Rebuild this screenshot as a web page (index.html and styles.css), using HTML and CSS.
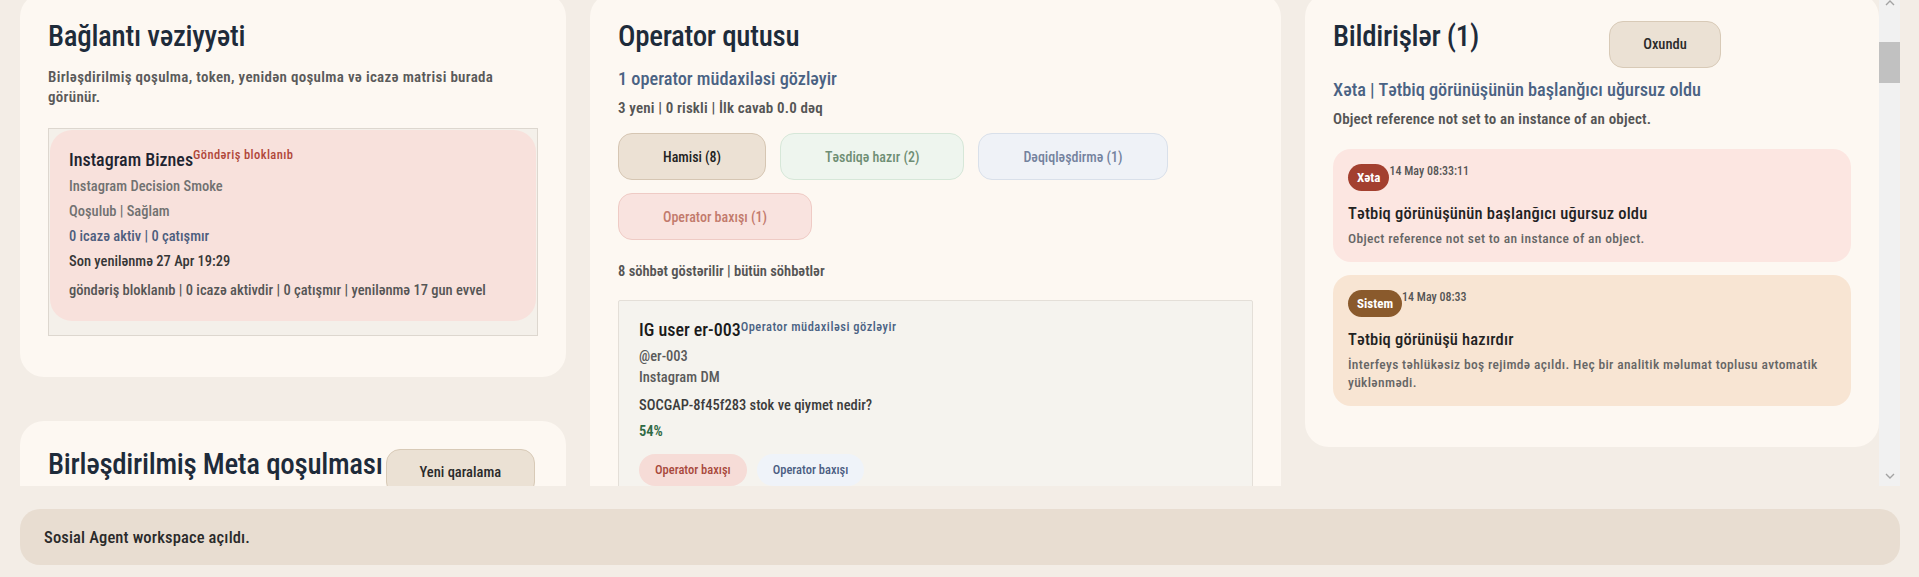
FILE: index.html
```html
<!DOCTYPE html>
<html lang="az">
<head>
  <meta charset="UTF-8" />
  <meta name="viewport" content="width=device-width, initial-scale=1.0"/>
  <title>Sosial Agent</title>
  <link rel="stylesheet" href="styles.css">
</head>
<body>

<div class="app">
  <div class="viewport-row">
    <main class="workspace" id="workspace">

      <!-- HEADER (scrolled out of view) -->
      <header class="hero">
        <h1>Sosial Agent</h1>
        <p>Instagram və Facebook söhbətləri, operator növbəsi və bildirişlər bir yerdə.</p>
      </header>

      <div class="board" id="board">

        <!-- LEFT COLUMN -->
        <div class="column">
          <section class="card">
            <h2 class="card-title">Bağlantı vəziyyəti</h2>
            <p class="card-desc">Birləşdirilmiş qoşulma, token, yenidən qoşulma və icazə matrisi burada görünür.</p>
            <div class="account-list">
              <div class="account">
                <h3 class="item-title">Instagram Biznes<span class="flag">Göndəriş bloklanıb</span></h3>
                <p class="row muted">Instagram Decision Smoke</p>
                <p class="row muted">Qoşulub | Sağlam</p>
                <p class="row info">0 icazə aktiv | 0 çatışmır</p>
                <p class="row strong">Son yenilənmə 27 Apr 19:29</p>
                <p class="row summary">göndəriş bloklanıb | 0 icazə aktivdir | 0 çatışmır | yenilənmə 17 gun evvel</p>
              </div>
            </div>
          </section>

          <section class="card card-tall">
            <div class="card-head">
              <h2 class="card-title">Birləşdirilmiş Meta qoşulması</h2>
              <button class="btn">Yeni qaralama</button>
              <span></span>
            </div>
          </section>
        </div>

        <!-- MIDDLE COLUMN -->
        <section class="card">
          <h2 class="card-title">Operator qutusu</h2>
          <p class="lead">1 operator müdaxiləsi gözləyir</p>
          <p class="meta-line">3 yeni | 0 riskli | İlk cavab 0.0 dəq</p>
          <div class="filters">
            <button class="filter filter-all">Hamisi (8)</button>
            <button class="filter filter-ready">Təsdiqə hazır (2)</button>
            <button class="filter filter-clarify">Dəqiqləşdirmə (1)</button>
            <button class="filter filter-review">Operator baxışı (1)</button>
          </div>
          <p class="list-meta">8 söhbət göstərilir | bütün söhbətlər</p>
          <div class="conversations" id="conversations"></div>
        </section>

        <!-- RIGHT COLUMN -->
        <div class="column">
          <section class="card">
            <div class="card-head">
              <h2 class="card-title">Bildirişlər (1)</h2>
              <button class="btn">Oxundu</button>
              <span></span>
            </div>
            <p class="lead lead-tight">Xəta | Tətbiq görünüşünün başlanğıcı uğursuz oldu</p>
            <p class="meta-line">Object reference not set to an instance of an object.</p>
            <div class="notes">
              <div class="note note-error">
                <div class="note-head">
                  <span class="pill pill-error">Xəta</span>
                  <span class="note-time">14 May 08:33:11</span>
                </div>
                <h4 class="note-title">Tətbiq görünüşünün başlanğıcı uğursuz oldu</h4>
                <p class="note-text">Object reference not set to an instance of an object.</p>
              </div>
              <div class="note note-system">
                <div class="note-head">
                  <span class="pill pill-system">Sistem</span>
                  <span class="note-time">14 May 08:33</span>
                </div>
                <h4 class="note-title">Tətbiq görünüşü hazırdır</h4>
                <p class="note-text">İnterfeys təhlükəsiz boş rejimdə açıldı. Heç bir analitik məlumat toplusu avtomatik yüklənmədi.</p>
              </div>
            </div>
          </section>
        </div>

      </div>
    </main>

    <!-- scrollbar of the workspace -->
    <div class="scrollbar">
      <span class="scroll-btn scroll-up"><svg width="10" height="6" viewBox="0 0 10 6"><polyline points="1,5 5,1 9,5" fill="none" stroke="#a3a3a3" stroke-width="1.4"/></svg></span>
      <span class="scroll-track"><span class="scroll-thumb"></span></span>
      <span class="scroll-btn scroll-down"><svg width="10" height="6" viewBox="0 0 10 6"><polyline points="1,1 5,5 9,1" fill="none" stroke="#a3a3a3" stroke-width="1.4"/></svg></span>
    </div>
  </div>

  <footer class="status">Sosial Agent workspace açıldı.</footer>
</div>

<script>
  const conversations = [
    { name: 'IG user er-003', state: 'Operator müdaxiləsi gözləyir', handle: '@er-003', channel: 'Instagram DM', text: 'SOCGAP-8f45f283 stok ve qiymet nedir?', score: 54, tags: [['review', 'Operator baxışı'], ['info', 'Operator baxışı']] },
    { name: 'IG user er-002', state: 'Təsdiqə hazır', handle: '@er-002', channel: 'Instagram DM', text: 'Çatdırılma neçə günə olur?', score: 81, tags: [['ready', 'Təsdiqə hazır']] },
    { name: 'IG user er-001', state: 'Təsdiqə hazır', handle: '@er-001', channel: 'Instagram DM', text: 'Bu məhsul hələ satışdadır?', score: 77, tags: [['ready', 'Təsdiqə hazır']] },
    { name: 'FB user fb-014', state: 'Dəqiqləşdirmə', handle: '@fb-014', channel: 'Facebook Messenger', text: 'Ölçü cədvəlini göndərə bilərsiniz?', score: 62, tags: [['info', 'Dəqiqləşdirmə']] },
    { name: 'FB user fb-011', state: 'Yeni', handle: '@fb-011', channel: 'Facebook Messenger', text: 'Salam, endirim var?', score: 70, tags: [['info', 'Yeni']] },
    { name: 'IG user er-009', state: 'Yeni', handle: '@er-009', channel: 'Instagram şərh', text: 'Qiymət?', score: 68, tags: [['info', 'Yeni']] },
    { name: 'IG user er-007', state: 'Yeni', handle: '@er-007', channel: 'Instagram DM', text: 'Mağazanın ünvanı haradır?', score: 73, tags: [['info', 'Yeni']] },
    { name: 'IG user er-005', state: 'Cavablandı', handle: '@er-005', channel: 'Instagram DM', text: 'Təşəkkürlər!', score: 90, tags: [['ready', 'Cavablandı']] }
  ];

  function renderConversations() {
    const list = document.getElementById('conversations');
    list.innerHTML = '';
    conversations.forEach(c => {
      const item = document.createElement('article');
      item.className = 'conv';
      item.innerHTML = `
        <h3 class="conv-title">${c.name}<span class="conv-state">${c.state}</span></h3>
        <p class="conv-handle">${c.handle}</p>
        <p class="conv-channel">${c.channel}</p>
        <p class="conv-text">${c.text}</p>
        <p class="conv-score">${c.score}%</p>
        <div class="tags">${c.tags.map(t => `<span class="tag tag-${t[0]}">${t[1]}</span>`).join('')}</div>
      `;
      list.appendChild(item);
    });
  }

  renderConversations();

  const ws = document.getElementById('workspace');
  const board = document.getElementById('board');
  ws.scrollTop = board.offsetTop + 7;
</script>

</body>
</html>
```
FILE: styles.css
```css
body {
  margin: 0;
  background: #f3ede6;
  font-family: Roboto, "Noto Sans", sans-serif;
  font-stretch: condensed;
  color: #1e2b3a;
}

p, h1, h2, h3, h4 {
  margin: 0;
}

button {
  font-family: inherit;
  font-stretch: inherit;
  cursor: pointer;
}

.app {
  padding: 0 19px 0 20px;
}

.viewport-row {
  display: flex;
  height: 486px;
}

/* scrolling area */
.workspace {
  position: relative;
  flex: 1;
  overflow: hidden;
}

.scrollbar {
  display: flex;
  flex-direction: column;
  width: 21px;
  background: #f1f1f1;
}

.scroll-btn {
  display: flex;
  justify-content: center;
}

.scroll-up {
  height: 13px;
  align-items: flex-start;
}

.scroll-down {
  height: 21px;
  align-items: center;
}

.scroll-track {
  flex: 1;
}

.scroll-thumb {
  display: block;
  height: 41px;
  margin-top: 29px;
  background: #c1c1c1;
}

.hero {
  height: 265px;
  margin-bottom: 24px;
  box-sizing: border-box;
  padding: 40px 28px;
  background: #fdf8f2;
  border-radius: 24px;
}

.hero h1 {
  font-size: 36px;
  font-weight: 500;
}

.hero p {
  margin-top: 10px;
  font-size: 16px;
  color: #595959;
}

.board {
  display: grid;
  grid-template-columns: 546fr 691fr 574fr;
  gap: 24px;
  align-items: start;
}

.column {
  display: flex;
  flex-direction: column;
  gap: 44px;
}

.card {
  background: #fdf8f2;
  border-radius: 24px;
  padding: 25px 28px 41px;
}

.card-tall {
  min-height: 320px;
}

.card-head {
  display: flex;
  justify-content: space-between;
  align-items: flex-start;
}

.card-title {
  font-size: 29px;
  line-height: 36px;
  font-weight: 500;
  letter-spacing: -0.3px;
  color: #1e2b3a;
}

.card-desc {
  margin-top: 13px;
  font-size: 15px;
  line-height: 20px;
  font-weight: 600;
  letter-spacing: 0.3px;
  color: #5a5a5a;
}

.btn {
  margin-top: 3px;
  height: 47px;
  padding: 0 33px;
  background: #ebe1d4;
  border: 1px solid #d8cab7;
  border-radius: 14px;
  font-size: 14.5px;
  font-weight: 500;
  white-space: nowrap;
  color: #2a2a2a;
}

/* connection status */
.account-list {
  margin-top: 21px;
  padding: 1px 1px 14px;
  background: #f4f0ea;
  border: 1px solid #ddd7cf;
}

.account {
  padding: 19px 19px 20px;
  background: #f8e1dc;
  border-radius: 22px;
}

.item-title {
  display: flex;
  align-items: flex-start;
  font-size: 18px;
  line-height: 22px;
  font-weight: 500;
  color: #1e2430;
}

.flag {
  font-size: 12.5px;
  line-height: 12px;
  letter-spacing: 0.4px;
  color: #b0473a;
}

.row {
  margin-top: 5px;
  font-size: 14.5px;
  line-height: 20px;
  font-weight: 500;
}

.row.muted:first-of-type {
  margin-top: 6px;
}

.muted {
  color: #717171;
}

.info {
  color: #4d5d7e;
}

.strong {
  color: #363636;
}

.summary {
  margin-top: 9px;
  color: #555;
}

/* operator inbox */
.lead {
  margin-top: 13px;
  font-size: 18.3px;
  line-height: 24px;
  font-weight: 500;
  color: #4a6283;
}

.lead-tight {
  margin-top: 10px;
}

.meta-line {
  margin-top: 7px;
  font-size: 15px;
  line-height: 20px;
  font-weight: 600;
  letter-spacing: 0.15px;
  color: #555;
}

.filters {
  display: flex;
  flex-wrap: wrap;
  gap: 13px 14px;
  margin-top: 15px;
}

.filter {
  height: 47px;
  padding: 0 44px;
  border: 1px solid;
  border-radius: 14px;
  font-size: 14px;
  font-weight: 500;
}

.filter-all {
  background: #ece1d4;
  border-color: #d6c6b3;
  color: #222;
}

.filter-ready {
  background: #eef5ee;
  border-color: #d6e7d8;
  color: #6e8e74;
}

.filter-clarify {
  background: #eff2f7;
  border-color: #d9e0ea;
  color: #74829e;
}

.filter-review {
  background: #f9e3df;
  border-color: #efcbc5;
  color: #c27a6c;
}

.list-meta {
  margin-top: 22px;
  font-size: 14.5px;
  line-height: 20px;
  font-weight: 600;
  color: #555;
}

.conversations {
  display: flex;
  flex-direction: column;
  gap: 14px;
  margin-top: 18px;
}

.conv {
  padding: 18px 20px 20px;
  background: #f5f3ee;
  border: 1px solid #e4dfd8;
  border-radius: 2px;
}

.conv-title {
  display: flex;
  align-items: flex-start;
  font-size: 18px;
  line-height: 22px;
  font-weight: 500;
  color: #1a1a1a;
}

.conv-state {
  font-size: 12.5px;
  line-height: 15px;
  font-weight: 500;
  letter-spacing: 0.5px;
  color: #4a6283;
}

.conv-handle,
.conv-channel {
  font-size: 14.5px;
  line-height: 21px;
  font-weight: 500;
  color: #5a5a5a;
}

.conv-handle {
  margin-top: 5px;
}

.conv-text {
  margin-top: 8px;
  font-size: 14.5px;
  line-height: 20px;
  font-weight: 500;
  color: #3c3c3c;
}

.conv-score {
  margin-top: 6px;
  font-size: 14.5px;
  line-height: 20px;
  font-weight: 600;
  color: #2f6a45;
}

.tags {
  display: flex;
  gap: 10px;
  margin-top: 12px;
}

.tag {
  padding: 0 16px;
  line-height: 32px;
  border-radius: 16px;
  font-size: 12.5px;
  font-weight: 500;
}

.tag-review {
  background: #f6dcd7;
  color: #a8483c;
}

.tag-info {
  background: #eff3f9;
  color: #4b5d82;
}

.tag-ready {
  background: #e8f2e9;
  color: #3f6e4b;
}

/* notifications */
.notes {
  display: flex;
  flex-direction: column;
  gap: 13px;
  margin-top: 20px;
}

.note {
  padding: 15px;
  border-radius: 18px;
}

.note-error {
  background: #fce6e1;
}

.note-system {
  background: #f8e5d3;
}

.note-head {
  display: flex;
  align-items: flex-start;
}

.pill {
  padding: 0 9px;
  line-height: 27px;
  border-radius: 14px;
  font-size: 13px;
  font-weight: 700;
  color: #fff;
}

.pill-error {
  background: #a3402f;
}

.pill-system {
  background: #8a5a2c;
}

.note-time {
  font-size: 12px;
  line-height: 14px;
  font-weight: 500;
  color: #555;
}

.note-title {
  margin-top: 13px;
  font-size: 16.5px;
  line-height: 20px;
  font-weight: 500;
  letter-spacing: 0.2px;
  color: #222;
}

.note-text {
  margin-top: 5px;
  font-size: 13.5px;
  line-height: 18px;
  font-weight: 500;
  letter-spacing: 0.35px;
  color: #666;
}

/* bottom status bar */
.status {
  display: flex;
  align-items: center;
  height: 56px;
  margin-top: 23px;
  padding: 0 24px;
  background: #e8ddd1;
  border-radius: 20px;
  font-size: 16.5px;
  font-weight: 500;
  letter-spacing: 0.15px;
  color: #2a2a2a;
}
```
